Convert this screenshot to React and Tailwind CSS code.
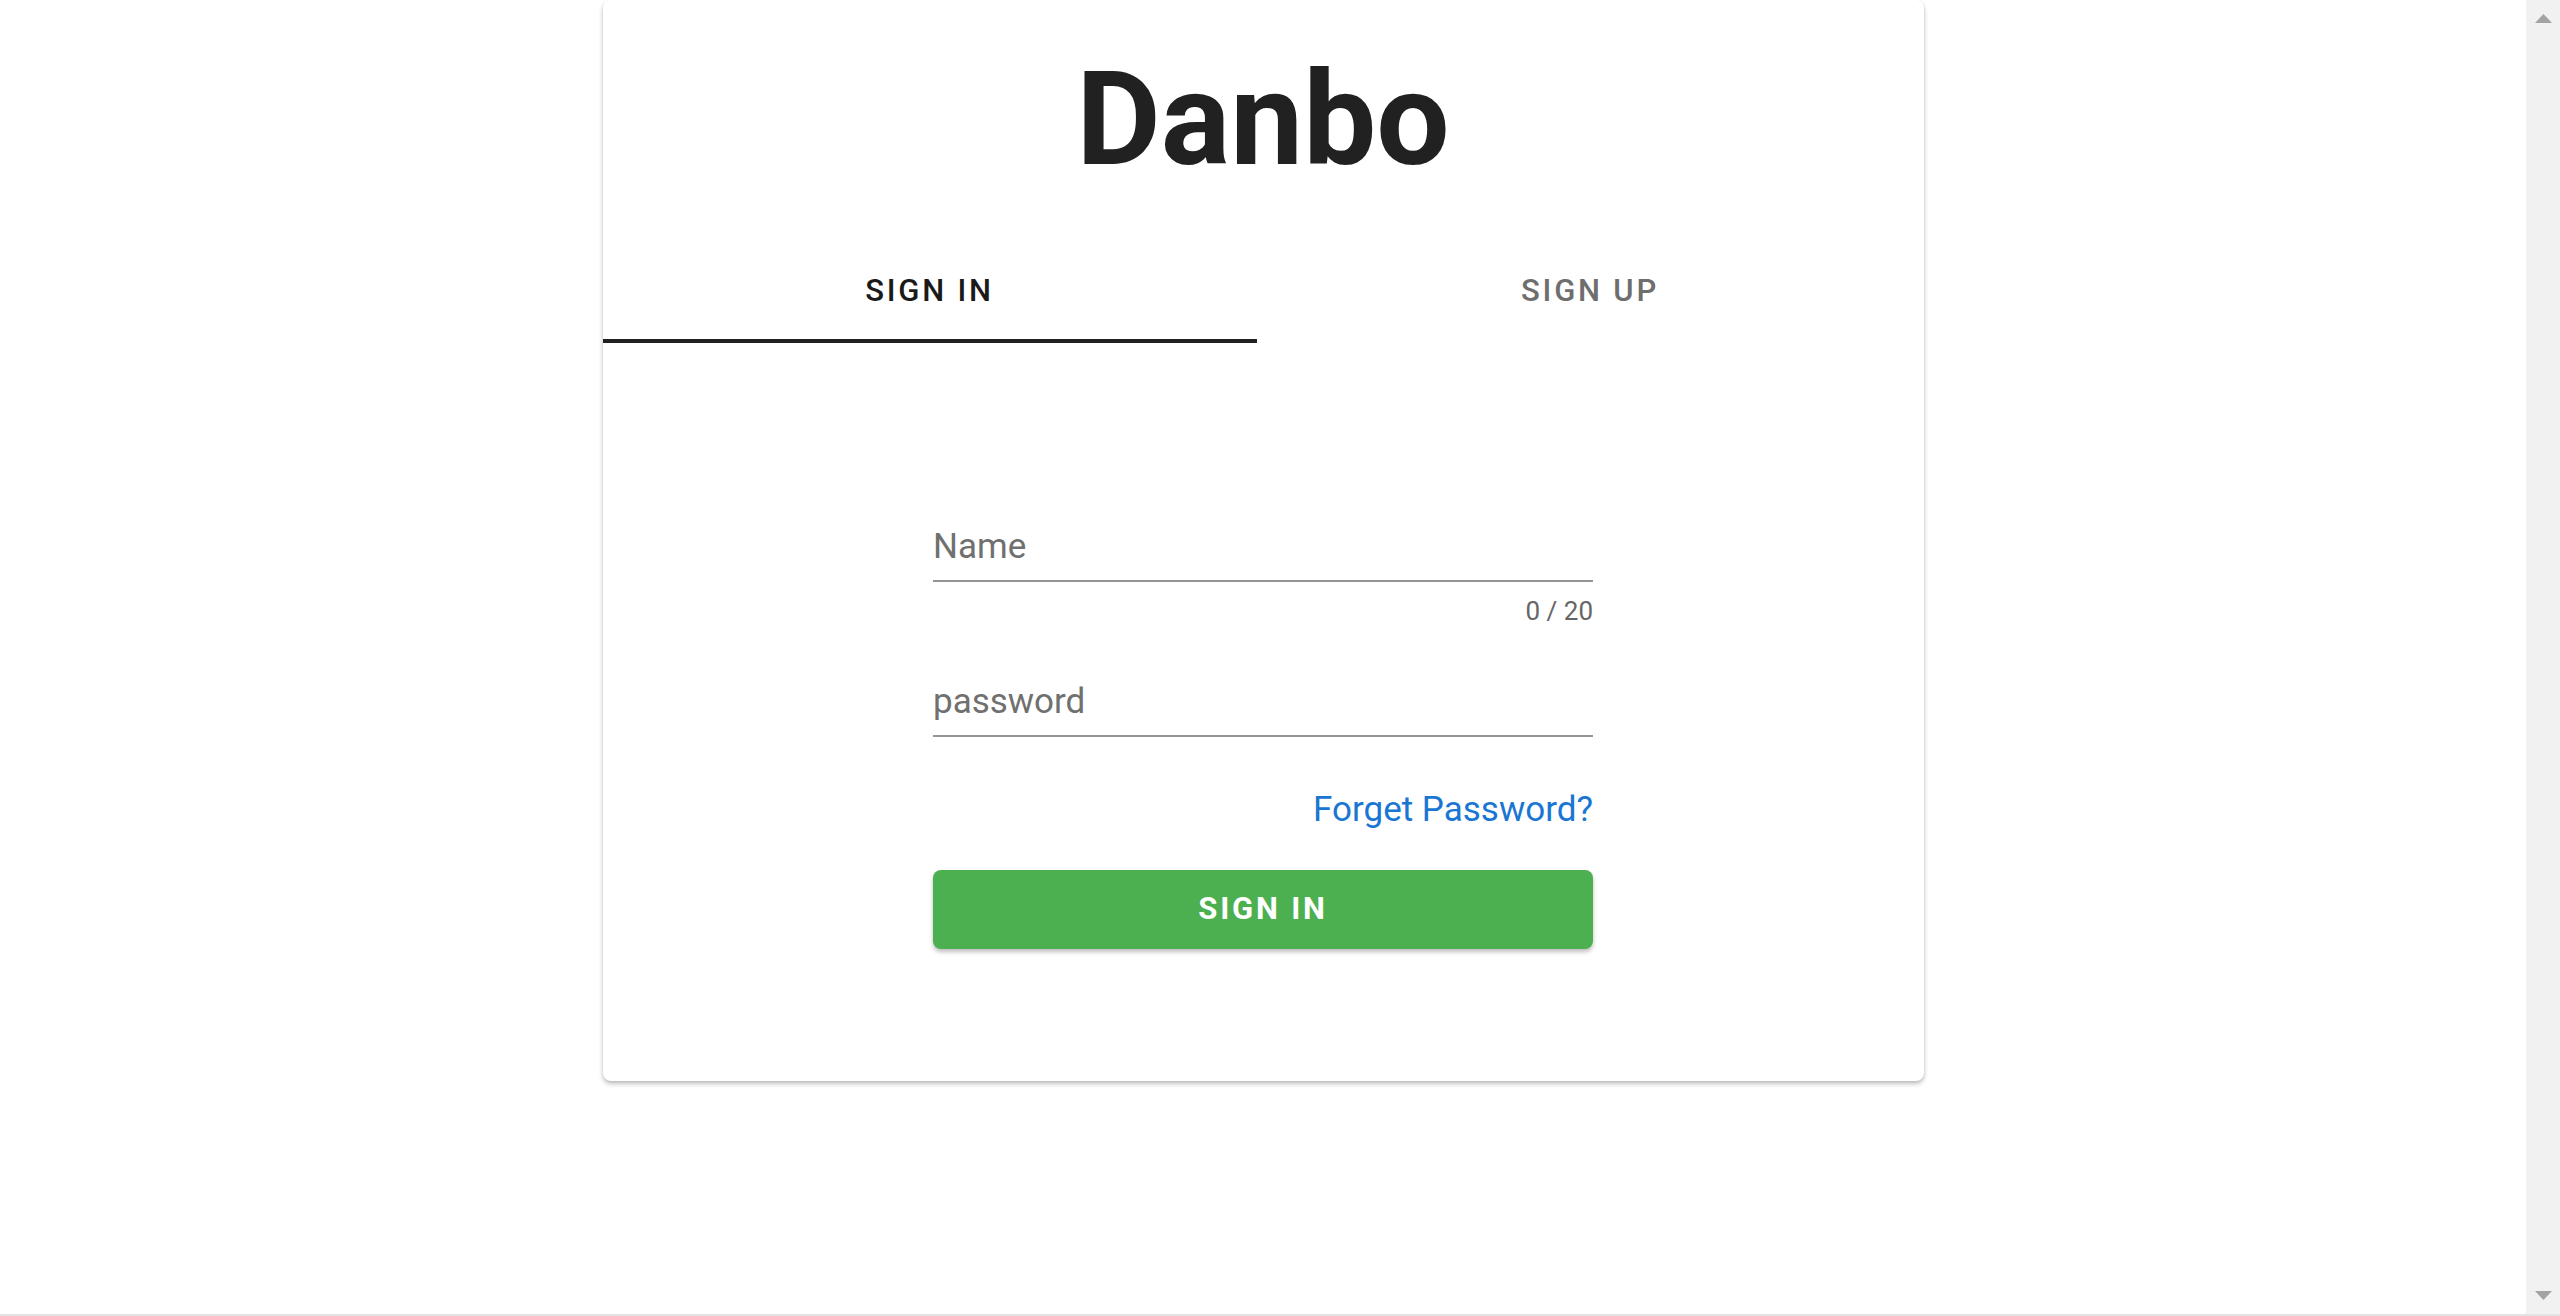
import { useState } from "react";

function Field({ placeholder, type = "text", counter }) {
  const [value, setValue] = useState("");
  return (
    <div>
      <div className="border-b-2 border-[#949494]">
        <input
          type={type}
          value={value}
          maxLength={counter}
          onChange={(e) => setValue(e.target.value)}
          placeholder={placeholder}
          className="w-full h-[68px] bg-transparent text-[35px] text-[#212121] placeholder:text-[#707070] outline-none"
        />
      </div>
      {counter ? (
        <div className="mt-[16px] text-right text-[26px] leading-[26px] text-[#666]">
          {value.length} / {counter}
        </div>
      ) : null}
    </div>
  );
}

export default function App() {
  const [tab, setTab] = useState(0);

  return (
    <div className="flex flex-col h-[1316px] w-full overflow-hidden bg-white" style={{ fontFamily: "Roboto, 'Noto Sans', sans-serif" }}>
      <div className="flex flex-1 min-h-0">
        <main className="flex-1 flex justify-center">
          <div className="w-[1321px] h-[1081px] bg-white rounded-[8px] shadow-[0_3px_5px_rgba(0,0,0,0.22),0_1px_3px_rgba(0,0,0,0.1)] flex flex-col">
            <h1 className="pt-[55px] text-center text-[130px] leading-none font-bold text-[#212121]">Danbo</h1>

            <div className="mt-[52px] flex">
              {["SIGN IN", "SIGN UP"].map((label, i) => (
                <button
                  key={label}
                  onClick={() => setTab(i)}
                  className={
                    "h-[106px] pt-[6px] flex items-center justify-center text-[31px] font-medium tracking-[0.09em] border-b-4 " +
                    (i === 0 ? "w-[654px] " : "flex-1 ") +
                    (tab === i ? "text-[#1a1a1a] border-[#212121]" : "text-[#6e6e6e] border-transparent")
                  }
                >
                  {label}
                </button>
              ))}
            </div>

            <div className="mx-auto w-[660px] mt-[169px]">
              <Field placeholder="Name" counter={20} />
              <div className="mt-[43px]">
                <Field placeholder="password" type="password" />
              </div>
              <div className="mt-[55px] text-right text-[35px] leading-[35px]">
                <a href="#" className="text-[#1976d2]">Forget Password?</a>
              </div>
              <button className="mt-[43px] w-full h-[79px] rounded-[8px] bg-[#4caf50] text-white text-[31px] font-bold tracking-[0.09em] shadow-[0_3px_4px_rgba(0,0,0,0.25)]">
                SIGN IN
              </button>
            </div>
          </div>
        </main>

        <div className="w-[34px] bg-[#f1f1f1] flex flex-col items-center justify-between py-[14px]">
          <svg width="17" height="9" viewBox="0 0 17 9"><path d="M8.5 0L17 9H0z" fill="#a3a3a3" /></svg>
          <svg width="17" height="9" viewBox="0 0 17 9"><path d="M0 0h17L8.5 9z" fill="#a3a3a3" /></svg>
        </div>
      </div>
      <div className="h-[2px] bg-[#e3e3e3]" />
    </div>
  );
}
